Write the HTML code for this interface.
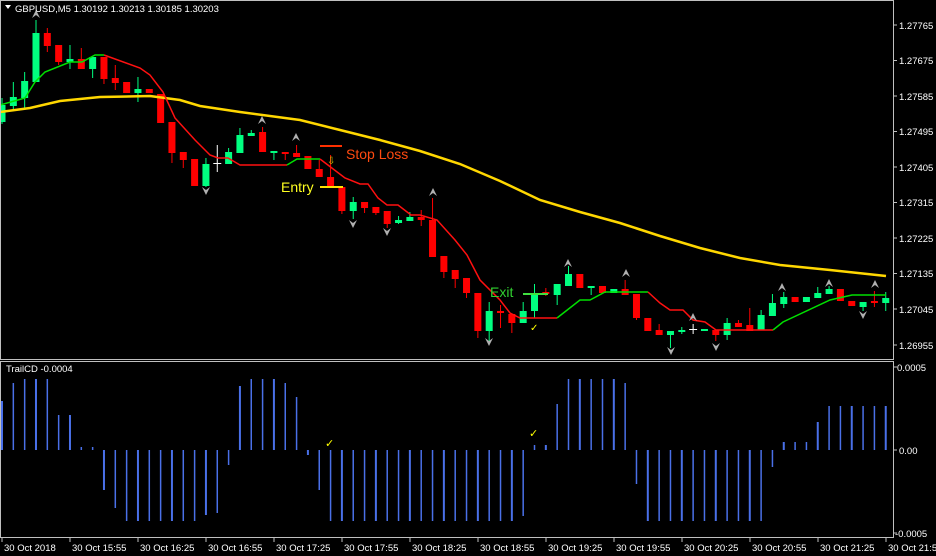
<!DOCTYPE html>
<html><head><meta charset="utf-8"><style>
html,body{margin:0;padding:0;background:#000;}
svg{display:block;font-family:"Liberation Sans",sans-serif;}
</style></head><body>
<svg id="s" width="936" height="556" viewBox="0 0 936 556" xmlns="http://www.w3.org/2000/svg">
<rect width="936" height="556" fill="#000"/>
<g id="cand"></g>
<g id="hist"></g>
<polyline fill="none" stroke="#ffd700" stroke-width="2.5" points="0,112 30,108 60,101 100,97 150,96 180,100 200,106 240,112 300,120 340,130 380,140 420,151 460,164 500,181 540,200 580,212 620,223 660,236 700,248 740,258 780,265 830,270 886,276"/>
<polyline fill="none" stroke="#00e000" stroke-width="1.5" points="0,105 25,98 35,82 45,72 70,62 82,62 95,55 104,55"/>
<polyline fill="none" stroke="#ff1010" stroke-width="1.5" points="104,55 140,68 150,75 163,92 175,118 195,140 210,155 218,158 228,158 240,165 287,165"/>
<polyline fill="none" stroke="#00e000" stroke-width="1.5" points="287,165 297,159 320,159"/>
<polyline fill="none" stroke="#ff1010" stroke-width="1.5" points="320,159 345,178 360,184 368,184 378,198 387,205 398,205 411,215 420,215 437,220 455,240 467,255 480,280 500,300 510,313 520,318 557,318"/>
<polyline fill="none" stroke="#00e000" stroke-width="1.5" points="557,318 580,300 590,300 605,292 648,292"/>
<polyline fill="none" stroke="#ff1010" stroke-width="1.5" points="648,292 660,303 670,310 683,310 693,320 705,322 716,330 773,330"/>
<polyline fill="none" stroke="#00e000" stroke-width="1.5" points="773,330 783,322 830,300 852,295 886,295"/>
<g id="arr"></g>
<line x1="320" y1="146" x2="342" y2="146" stroke="#ff3000" stroke-width="2"/>
<text x="346" y="159" fill="#ff4a10" font-size="14">Stop Loss</text>
<line x1="320" y1="187" x2="343" y2="187" stroke="#ffe000" stroke-width="2"/>
<text x="281" y="192" fill="#ffff20" font-size="14">Entry</text>
<line x1="523" y1="294" x2="548" y2="294" stroke="#40e040" stroke-width="2"/>
<text x="490" y="297" fill="#30d030" font-size="14">Exit</text>
<text x="327" y="164" fill="#c8c800" font-size="10">⇩</text>
<text x="325" y="447" fill="#ffff00" font-size="11">✓</text>
<text x="529" y="437" fill="#ffff00" font-size="11">✓</text>
<text x="530" y="331" fill="#ffff00" font-size="10">✓</text>
<rect x="0.5" y="0.5" width="893" height="359" fill="none" stroke="#c0c0c0"/>
<rect x="0.5" y="361.5" width="893" height="176" fill="none" stroke="#c0c0c0"/>
<path d="M5,5 L11,5 L8,9 Z" fill="#fff"/>
<text x="15" y="12" fill="#fff" font-size="9.5">GBPUSD,M5  1.30192 1.30213 1.30185 1.30203</text>
<text x="6" y="372" fill="#fff" font-size="9.5">TrailCD -0.0004</text>
<g fill="#fff" font-size="9.5">
<text x="899" y="29">1.27765</text>
<text x="899" y="64">1.27675</text>
<text x="899" y="100">1.27585</text>
<text x="899" y="135">1.27495</text>
<text x="899" y="171">1.27405</text>
<text x="899" y="206">1.27315</text>
<text x="899" y="242">1.27225</text>
<text x="899" y="277">1.27135</text>
<text x="899" y="313">1.27045</text>
<text x="899" y="349">1.26955</text>
<text x="897" y="371">0.0005</text>
<text x="899" y="454">0.00</text>
<text x="895" y="537">-0.0005</text>
<text x="4" y="551">30 Oct 2018</text>
<text x="72" y="551">30 Oct 15:55</text>
<text x="140" y="551">30 Oct 16:25</text>
<text x="208" y="551">30 Oct 16:55</text>
<text x="276" y="551">30 Oct 17:25</text>
<text x="344" y="551">30 Oct 17:55</text>
<text x="412" y="551">30 Oct 18:25</text>
<text x="480" y="551">30 Oct 18:55</text>
<text x="548" y="551">30 Oct 19:25</text>
<text x="616" y="551">30 Oct 19:55</text>
<text x="684" y="551">30 Oct 20:25</text>
<text x="752" y="551">30 Oct 20:55</text>
<text x="820" y="551">30 Oct 21:25</text>
<text x="888" y="551">30 Oct 21:55</text>
</g>
<g id="ticks"></g>
</svg>
<script>
var NS="http://www.w3.org/2000/svg";
function el(p,t,a){var e=document.createElementNS(NS,t);for(var k in a)e.setAttribute(k,a[k]);document.getElementById(p).appendChild(e);}
var C=[["g",105,122,98,124],["g",97,106,82,110],["g",81,98,72,108],["g",33,82,20,82],["r",33,46,28,52],["r",45,62,45,65],["g",59,62,45,69],["r",59,69,48,69],["g",57,69,57,78],["r",57,79,57,84],
["r",78,83,65,90],["r",82,93,82,93],["g",89,93,77,102],["r",89,93,89,93],["r",94,123,94,123],["r",122,153,122,163],["r",152,160,152,168],["r",159,186,159,186],["g",164,186,158,187],["w",163,164,145,172],
["g",152,164,148,164],["g",135,153,128,153],["g",133,136,130,136],["r",132,152,127,152],["g",151,153,151,160],["r",152,154,152,160],["r",153,157,145,157],["r",156,169,156,169],["r",169,177,160,177],["r",177,186,155,186],
["r",187,211,187,214],["g",202,211,197,219],["r",202,208,202,213],["r",207,213,207,215],["r",211,224,211,228],["g",220,223,216,224],["g",217,221,212,221],["r",217,220,210,226],["r",220,257,198,257],["r",256,272,256,278],
["r",270,279,270,288],["r",278,293,278,298],["r",293,331,293,338],["g",311,331,302,341],["r",311,313,305,328],["r",314,323,314,333],["g",311,323,302,323],["g",294,311,284,318],["r",292,294,288,296],["g",284,295,284,305],
["g",274,286,266,286],["r",274,288,274,288],["g",286,288,286,295],["r",286,293,286,293],["g",289,293,289,293],["r",289,295,280,295],["r",294,318,294,320],["r",318,331,318,331],["r",330,335,324,335],["g",331,335,331,348],
["g",330,331,327,334],["w",329,330,324,334],["g",329,331,329,331],["r",330,335,330,341],["g",323,335,318,340],["r",323,327,320,327],["r",325,331,308,331],["g",315,330,310,330],["g",303,316,294,316],["g",297,304,292,308],
["r",297,302,297,302],["g",297,302,297,302],["g",293,298,287,298],["g",289,294,286,294],["r",289,301,289,301],["r",301,306,301,306],["g",302,307,302,311],["r",301,303,291,307],["g",298,303,292,311]];
var col={g:"#00ff80",r:"#ff0000",w:"#ffffff"};
for(var i=0;i<C.length;i++){var x=2+11.33*i,c=C[i],f=col[c[0]];
el("cand","line",{x1:x,x2:x,y1:c[3],y2:c[4],stroke:f,"stroke-width":1});
var h=Math.max(c[2]-c[1],2);
if(c[0]=="w")el("cand","rect",{x:x-4,y:c[1],width:8,height:1,fill:f});
else el("cand","rect",{x:x-3.5,y:c[1],width:7,height:h,fill:f});}
var H=[49,67,71,71,71,35,35,3,3,-40,-58,-71,-71,-71,-71,-71,-71,-71,-65,-63,-15,64,71,71,71,67,53,-5,-40];
for(i=29;i<=45;i++)H.push(-71);
H.push(-66,5,5,46,71,71,71,71,71,67,-34);
for(i=57;i<=67;i++)H.push(-71);
H.push(-17,8,8,8,28,44,44,44,44,44,44);
for(i=0;i<H.length;i++){var x=2+11.33*i,v=H[i];
el("hist","line",{x1:x,x2:x,y1:450,y2:450-v,stroke:"#4a70e8","stroke-width":(i%3==0?2:1.5)});}
var up=[[36,14],[262,120],[296,137],[433,192],[568,263],[626,273],[693,317],[782,287],[829,283],[875,284]];
var dn=[[206,191],[353,224],[387,232],[489,342],[671,351],[716,347],[863,315]];
up.forEach(function(p){el("arr","path",{d:"M"+(p[0]-4)+","+(p[1]+4)+" L"+p[0]+","+(p[1]-4)+" L"+(p[0]+4)+","+(p[1]+4)+" L"+p[0]+","+(p[1]+1)+"Z",fill:"#b0b0b0"});});
dn.forEach(function(p){el("arr","path",{d:"M"+(p[0]-4)+","+(p[1]-4)+" L"+p[0]+","+(p[1]+4)+" L"+(p[0]+4)+","+(p[1]-4)+" L"+p[0]+","+(p[1]-1)+"Z",fill:"#b0b0b0"});});
var ys=[25,60.5,96,131.5,167,202.5,238,273.5,309,345,367,450,533];
ys.forEach(function(y){el("ticks","line",{x1:893,x2:897,y1:y,y2:y,stroke:"#c0c0c0"});});
for(i=0;i<14;i++){var x=2+68*i;el("ticks","line",{x1:x,x2:x,y1:538,y2:542,stroke:"#c0c0c0"});}
</script>
</body></html>
